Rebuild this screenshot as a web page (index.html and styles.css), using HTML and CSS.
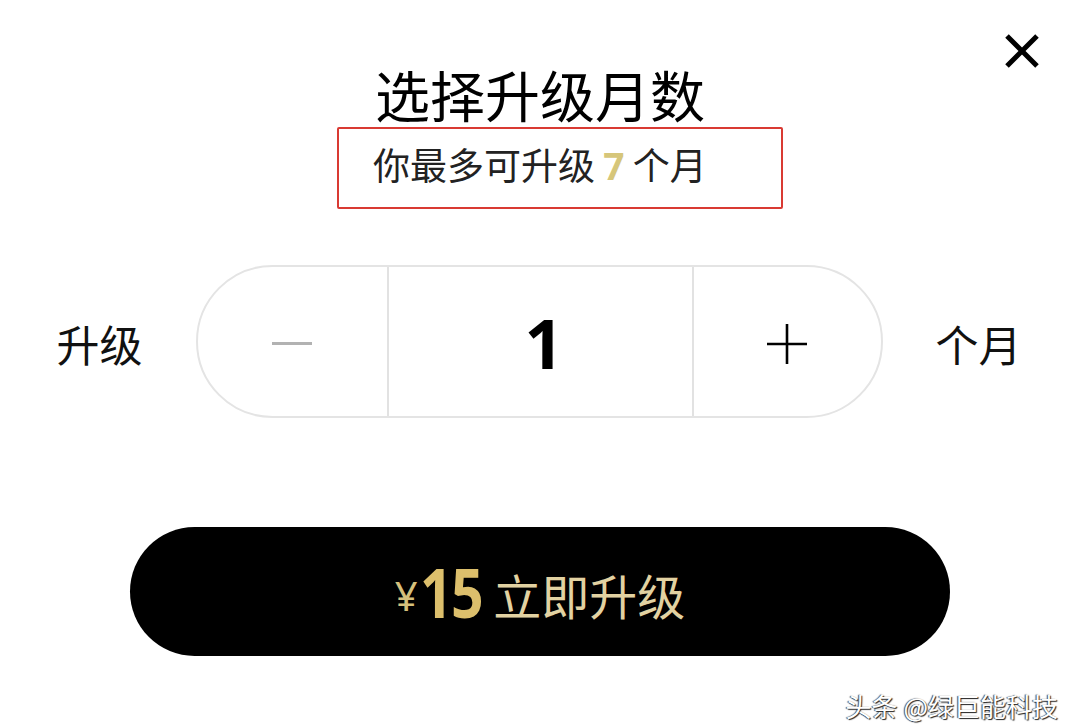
FILE: index.html
```html
<!DOCTYPE html>
<html>
  <head>
    <title>选择升级月数</title>
    <meta name="viewport" content="width=device-width, initial-scale=1">
    <link rel="stylesheet" href="styles.css">
  </head>
  <body>
    <div class="sheet">
      <div class="sheet-head">
        <button class="close" aria-label="关闭">
          <svg width="36" height="34" viewBox="0 0 36 34">
            <path d="M3 2 L33 32 M33 2 L3 32" stroke="#000" stroke-width="5" fill="none"/>
          </svg>
        </button>
      </div>

      <h1 class="title">选择升级月数</h1>
      <div class="hint-wrap">
        <p class="hint">你最多可升级 <b class="max">7</b> 个月</p>
      </div>

      <div class="stepper-row">
        <span class="label">升级</span>
        <div class="stepper">
          <div class="step step-minus"><span class="minus"></span></div>
          <div class="step step-value">1</div>
          <div class="step step-plus">
            <svg width="42" height="42" viewBox="0 0 42 42">
              <path d="M21 1 V41 M1 21 H41" stroke="#000" stroke-width="2.6" fill="none"/>
            </svg>
          </div>
        </div>
        <span class="label">个月</span>
      </div>

      <div class="pay-wrap">
        <button class="pay">
          <span class="yen">¥</span><span class="price">15</span><span class="pay-text">立即升级</span>
        </button>
      </div>

      <div class="watermark">头条 @绿巨能科技</div>
    </div>
  </body>
</html>
```

FILE: styles.css
```css
body {
    margin: 0;
    background: #fff;
    font-family: "Noto Sans CJK SC", "Noto Sans", sans-serif;
    color: #000;
}

.sheet {
    position: relative;
    width: 1080px;
    height: 725px;
    overflow: hidden;
}

.sheet-head {
    display: flex;
    justify-content: flex-end;
    height: 65px;
    padding-right: 40px;
    box-sizing: border-box;
}

.close {
    margin-top: 34px;
    padding: 0;
    border: 0;
    background: none;
    width: 36px;
    height: 34px;
    cursor: pointer;
}

.close svg {
    display: block;
}

.title {
    margin: 0;
    text-align: center;
    font-size: 55px;
    line-height: 56px;
    font-weight: 400;
}

.hint-wrap {
    display: flex;
    justify-content: center;
    margin-top: 6px;
}

.hint {
    margin: 0 0 0 40px;
    width: 446px;
    height: 82px;
    box-sizing: border-box;
    border: 2px solid #d93a33;
    border-radius: 2px;
    padding: 17px 78px 0 34px;
    font-size: 37px;
    line-height: 37px;
    color: #222;
    text-align: center;
    white-space: nowrap;
}

.max {
    color: #d6c67a;
    font-family: "Noto Sans", sans-serif;
    font-weight: 700;
}

.stepper-row {
    display: flex;
    justify-content: center;
    align-items: center;
    gap: 53px;
    margin-top: 56px;
    padding-right: 2px;
}

.label {
    font-size: 43px;
    line-height: 43px;
    padding-top: 4px;
    color: #111;
}

.stepper {
    display: flex;
    width: 687px;
    height: 153px;
    box-sizing: border-box;
    border: 2px solid #e4e4e4;
    border-radius: 77px;
}

.step {
    display: flex;
    align-items: center;
    justify-content: center;
}

.step-minus {
    width: 189px;
    border-right: 2px solid #e2e2e2;
}

.minus {
    display: block;
    width: 40px;
    height: 3px;
    background: #b2b2b2;
    margin: 4px 0 0 0;
}

.step-value {
    width: 305px;
    border-right: 2px solid #e2e2e2;
    font-family: "Noto Sans", sans-serif;
    font-weight: 700;
    font-size: 68px;
    padding: 2px 0 0 8px;
    box-sizing: border-box;
}

.step-plus {
    flex: 1;
    padding-top: 4px;
    box-sizing: border-box;
}

.step-plus svg {
    display: block;
}

.pay-wrap {
    display: flex;
    justify-content: center;
    margin-top: 109px;
}

.pay {
    width: 820px;
    height: 129px;
    border: 0;
    border-radius: 65px;
    background: #000;
    display: flex;
    align-items: center;
    justify-content: center;
    cursor: pointer;
    padding: 0;
    font-family: inherit;
}

.yen {
    color: #d5c07c;
    font-size: 40px;
    margin-top: 8px;
    font-family: "Noto Sans", sans-serif;
}

.price {
    display: inline-block;
    color: #dcbf6c;
    font-family: "Noto Sans", sans-serif;
    font-weight: 700;
    font-size: 68px;
    letter-spacing: -2px;
    transform: scaleX(0.84);
    margin: 0 6px 0 -4px;
}

.pay-text {
    color: #e2d2a2;
    font-size: 48px;
    margin-top: 4px;
}

.watermark {
    position: absolute;
    right: 22px;
    bottom: 4px;
    font-size: 26px;
    line-height: 30px;
    color: #fff;
    text-shadow: 1px 1px 1px #222, -1px 0 1px #444;
}
```
